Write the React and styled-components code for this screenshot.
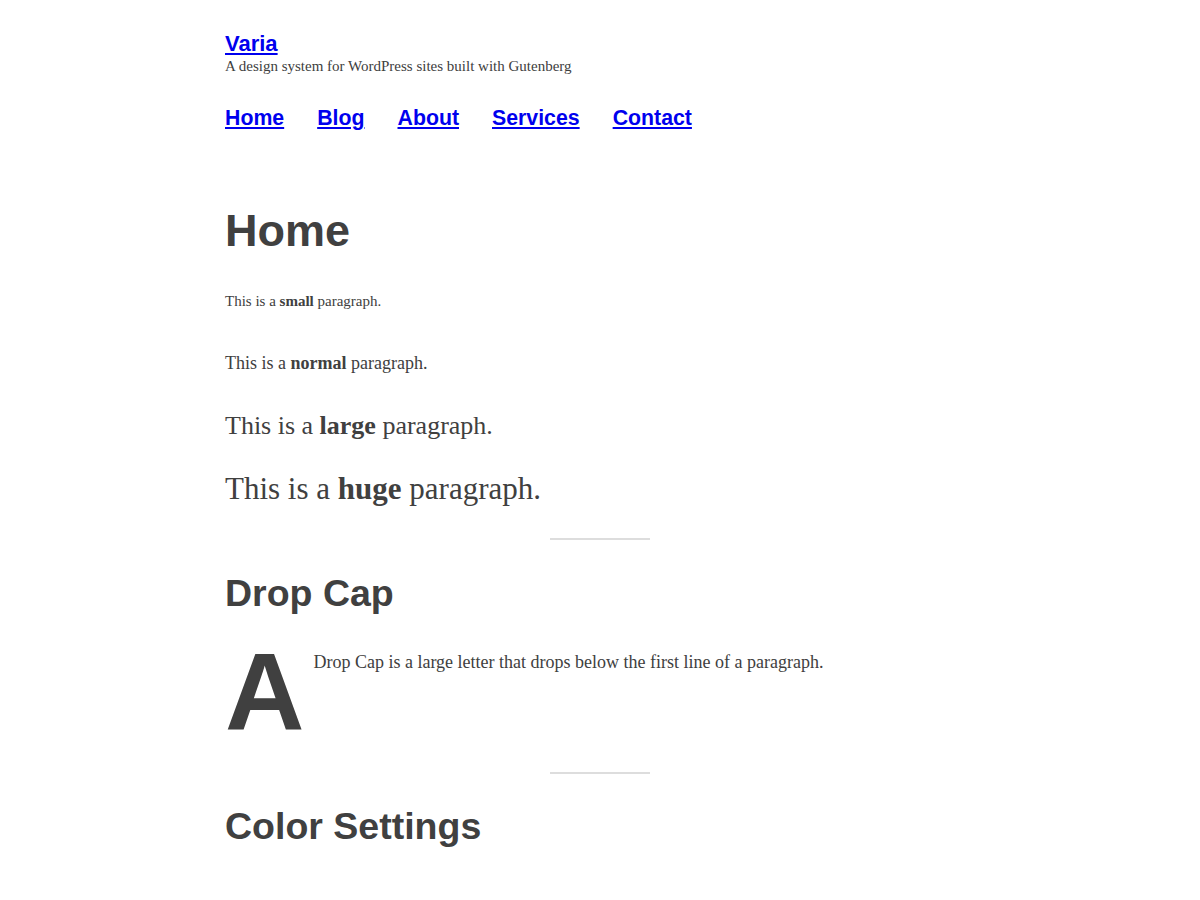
import styled, { createGlobalStyle } from "styled-components";

const GlobalStyle = createGlobalStyle`
  body {
    margin: 0;
    background: #fff;
    color: #404040;
    font-family: "Liberation Serif", "Times New Roman", serif;
  }
`;

const Page = styled.div`
  width: 750px;
  margin: 0 auto;
  padding-top: 31px;
`;

const Header = styled.header`
  display: flex;
  flex-direction: column;
`;

const SiteTitle = styled.a`
  font-family: "Liberation Sans", Arial, sans-serif;
  font-weight: 700;
  font-size: 22px;
  line-height: 1.2;
  color: #0000ee;
  text-decoration: underline;
  align-self: flex-start;
`;

const Tagline = styled.p`
  margin: 0;
  font-size: 15px;
  line-height: 1.2;
  color: #404040;
`;

const Nav = styled.nav`
  display: flex;
  gap: 33px;
  margin-top: 31px;
`;

const NavLink = styled.a`
  font-family: "Liberation Sans", Arial, sans-serif;
  font-weight: 700;
  font-size: 21.3px;
  line-height: 1.2;
  color: #0000ee;
  text-decoration: underline;
`;

const Main = styled.main`
  margin-top: 72px;
`;

const Title = styled.h1`
  font-family: "Liberation Sans", Arial, sans-serif;
  font-weight: 700;
  font-size: 45px;
  line-height: 1.2;
  margin: 0 0 32px;
  color: #404040;
`;

const SectionTitle = styled.h2`
  font-family: "Liberation Sans", Arial, sans-serif;
  font-weight: 700;
  font-size: 37.5px;
  line-height: 1.2;
  margin: 0 0 33px;
  color: #404040;
`;

const Para = styled.p`
  margin: 0 0 ${(p) => p.$gap}px;
  font-size: ${(p) => p.$size}px;
  line-height: 1.5;
  color: #404040;
`;

const Separator = styled.hr`
  width: 100px;
  height: 0;
  border: 0;
  border-top: 2px solid #dddddd;
  margin: ${(p) => p.$top}px auto ${(p) => p.$bottom}px;
`;

const DropCapPara = styled.p`
  margin: 0;
  font-size: 18px;
  line-height: 1.5;
  color: #404040;
  display: flow-root;
`;

const DropLetter = styled.span`
  float: left;
  font-family: "Liberation Sans", Arial, sans-serif;
  font-weight: 700;
  font-size: 110px;
  line-height: 0.85;
  margin: -5px 9px 0 0;
  color: #404040;
`;

const paragraphs = [
  { size: 15, word: "small", gap: 38 },
  { size: 18, word: "normal", gap: 29 },
  { size: 26, word: "large", gap: 21 },
  { size: 31, word: "huge", gap: 0 },
];

const navItems = ["Home", "Blog", "About", "Services", "Contact"];

export default function App() {
  return (
    <>
      <GlobalStyle />
      <Page>
        <Header>
          <SiteTitle href="#">Varia</SiteTitle>
          <Tagline>A design system for WordPress sites built with Gutenberg</Tagline>
          <Nav>
            {navItems.map((item) => (
              <NavLink key={item} href="#">
                {item}
              </NavLink>
            ))}
          </Nav>
        </Header>
        <Main>
          <Title>Home</Title>
          {paragraphs.map((p) => (
            <Para key={p.word} $size={p.size} $gap={p.gap}>
              This is a <strong>{p.word}</strong> paragraph.
            </Para>
          ))}
          <Separator $top={25} $bottom={31} />
          <SectionTitle>Drop Cap</SectionTitle>
          <DropCapPara>
            <DropLetter>A</DropLetter>
            Drop Cap is a large letter that drops below the first line of a
            paragraph.
          </DropCapPara>
          <Separator $top={35} $bottom={30} />
          <SectionTitle>Color Settings</SectionTitle>
        </Main>
      </Page>
    </>
  );
}
